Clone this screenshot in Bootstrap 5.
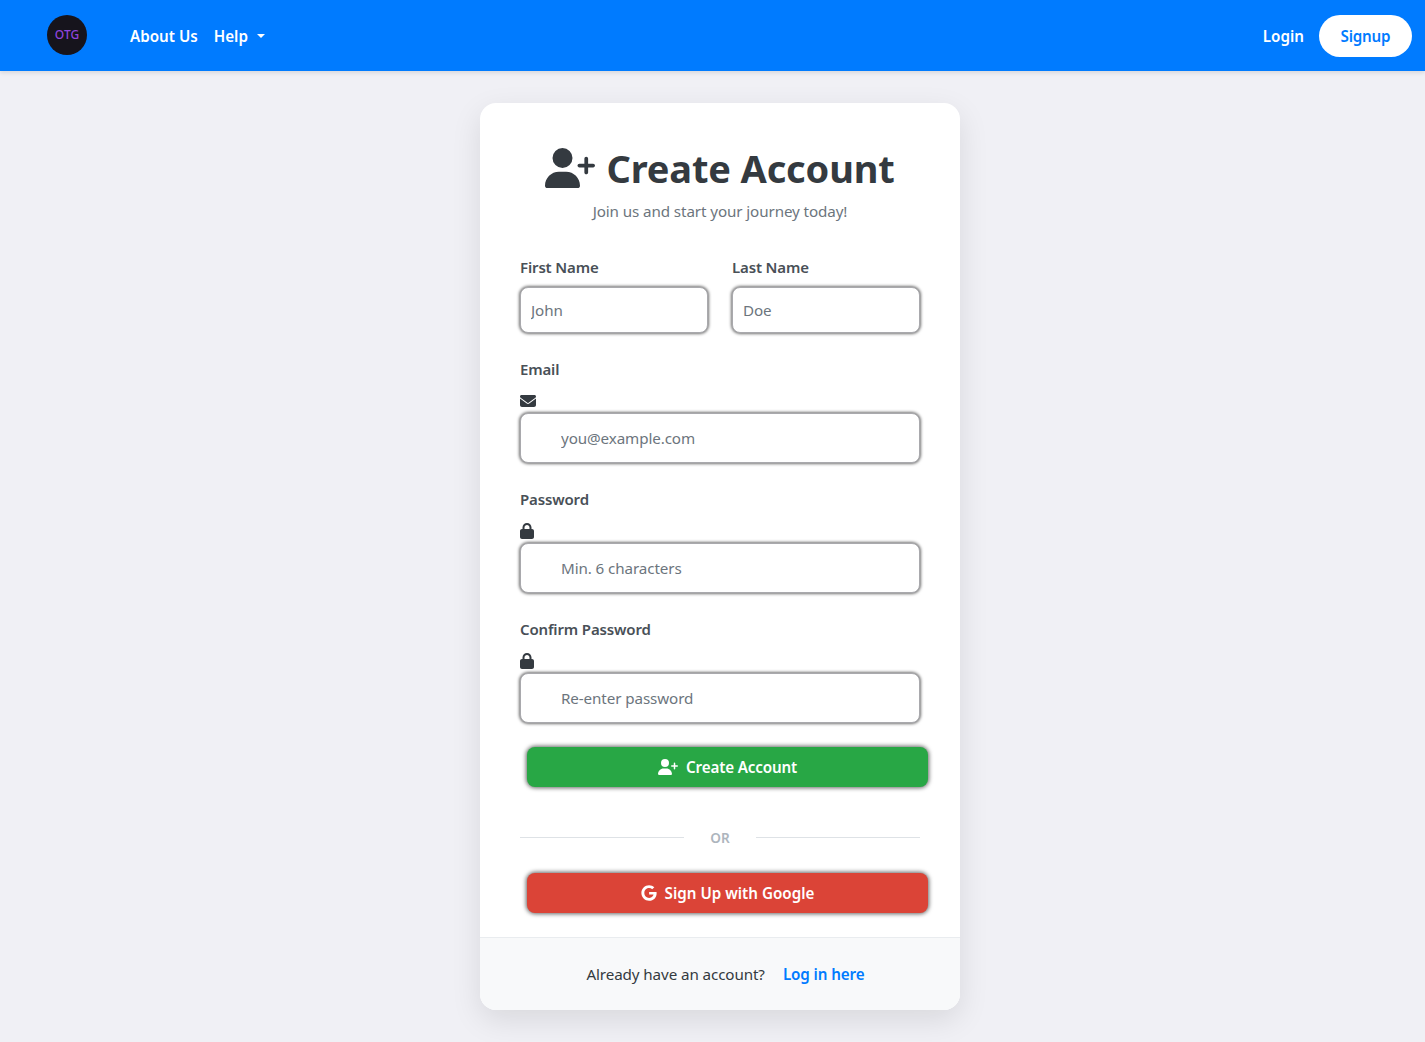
<!DOCTYPE html>
<html lang="en">
<head>
<meta charset="utf-8">
<title>Create Account</title>
<link href="https://cdn.jsdelivr.net/npm/bootstrap@5.3.0/dist/css/bootstrap.min.css" rel="stylesheet">
<style>
body{background:#f0f0f5;font-family:"Noto Sans","Open Sans",sans-serif;color:#343a40;min-height:1042px}
.topbar{background:#007bff;height:71px;padding:0 13px 0 47px;box-shadow:0 2px 4px rgba(0,0,0,.1)}
.logo-disc{width:40px;height:40px;border-radius:50%;background:#16141c;color:#9044dc;font-size:12px;line-height:40px;text-align:center;font-weight:500;margin-right:43px;margin-top:-1px}
.top-link{color:#fff;font-weight:600;font-size:15.2px;text-decoration:none;padding-top:2px}
.top-caret{display:inline-block;margin-left:9px;vertical-align:4px;border-top:4.5px solid #fff;border-left:4.5px solid transparent;border-right:4.5px solid transparent}
.signup-pill{background:#fff;color:#007bff;border-radius:21px;width:93px;height:42px;line-height:42px;text-align:center;margin-left:15px;font-weight:600;font-size:15.2px;text-decoration:none;letter-spacing:-.2px}
.panel-wrap{padding-left:15px}
.signup-panel{width:480px;margin-top:32px;background:#fff;border-radius:16px;box-shadow:0 10px 30px rgba(0,0,0,.1);overflow:hidden}
.panel-head{padding:39px 40px 0;text-align:center}
.panel-title{font-size:38px;font-weight:700;line-height:52px;margin:0;color:#343a40;letter-spacing:-.15px}
.panel-title svg{width:50px;height:40px;vertical-align:-5px;margin-right:11px;fill:#343a40}
.panel-sub{color:#6c757d;font-size:15.2px;line-height:24px;margin:5px 0 0;letter-spacing:-.1px}
.panel-form{padding:32px 40px 0}
.field-label{display:block;font-weight:600;font-size:15px;line-height:24px;margin-bottom:8px;color:#495057;letter-spacing:-.15px}
.field-input{display:block;width:100%;height:46px;padding:0 10px;border:1px solid #a9a9ad;border-radius:8px;font-size:15.2px;color:#343a40;box-shadow:0 0 3px 1px rgba(0,0,0,.55);letter-spacing:-.1px;font-family:inherit}
.field-input::placeholder{color:#6c757d;opacity:1}
.field-input.tall{height:50px;padding-left:40px}
.field-icon{display:block;height:16px;margin:12px 0 4px;fill:#343a40}
.field-gap{margin-bottom:24px}
.act-btn{display:flex;align-items:center;justify-content:center;gap:8px;width:401px;height:40px;margin-left:7px;border:0;border-radius:8px;color:#fff;font-size:15.2px;font-weight:600;box-shadow:0 0 4px 1px rgba(0,0,0,.6);letter-spacing:-.15px;font-family:inherit}
.act-green{background:#28a745}
.act-red{background:#db4437;letter-spacing:0}
.act-btn svg{fill:#fff}
.or-rule{display:flex;align-items:center;color:#adb5bd;font-size:13.6px;font-weight:600;height:20px;margin:40px 0 26px}
.or-rule::before,.or-rule::after{content:"";flex:1;height:1px;background:#dee2e6}
.or-rule span{width:72px;text-align:center;padding-top:2px}
.panel-foot{margin-top:24px;height:73px;padding-left:11px;background:#f8f9fa;border-top:1px solid #e9ecef;font-size:15.2px;letter-spacing:-.1px}
.panel-foot a{color:#007bff;font-weight:600;text-decoration:none;margin-left:18px}
</style>
</head>
<body>
<nav class="topbar d-flex align-items-center">
  <div class="logo-disc">OTG</div>
  <a class="top-link me-3" href="#">About Us</a>
  <a class="top-link" href="#">Help<span class="top-caret"></span></a>
  <a class="top-link ms-auto" href="#">Login</a>
  <a class="signup-pill" href="#">Signup</a>
</nav>

<div class="panel-wrap d-flex justify-content-center">
<main class="signup-panel">
  <div class="panel-head">
    <h1 class="panel-title"><svg viewBox="0 0 640 512"><path d="M96 128a128 128 0 1 1 256 0A128 128 0 1 1 96 128zM0 482.3C0 383.8 79.8 304 178.3 304h91.4C368.2 304 448 383.8 448 482.3c0 16.4-13.3 29.7-29.7 29.7H29.7C13.3 512 0 498.7 0 482.3zM504 312V248H440c-13.3 0-24-10.7-24-24s10.7-24 24-24h64V136c0-13.3 10.7-24 24-24s24 10.7 24 24v64h64c13.3 0 24 10.7 24 24s-10.7 24-24 24H552v64c0 13.3-10.7 24-24 24s-24-10.7-24-24z"/></svg>Create Account</h1>
    <p class="panel-sub">Join us and start your journey today!</p>
  </div>
  <form class="panel-form">
    <div class="row gx-4 field-gap">
      <div class="col-6"><label class="field-label">First Name</label><input class="field-input" placeholder="John"></div>
      <div class="col-6"><label class="field-label">Last Name</label><input class="field-input" placeholder="Doe"></div>
    </div>
    <div class="field-gap">
      <label class="field-label mb-0">Email</label>
      <svg class="field-icon" viewBox="0 0 512 512" width="16" height="16"><path d="M48 64C21.5 64 0 85.5 0 112c0 15.1 7.1 29.3 19.2 38.4L236.8 313.6c11.4 8.5 27 8.5 38.4 0L492.8 150.4c12.1-9.1 19.2-23.3 19.2-38.4c0-26.5-21.5-48-48-48H48zM0 176V384c0 35.3 28.7 64 64 64H448c35.3 0 64-28.7 64-64V176L294.4 339.2c-22.8 17.1-54 17.1-76.8 0L0 176z"/></svg>
      <input class="field-input tall" placeholder="you@example.com">
    </div>
    <div class="field-gap">
      <label class="field-label mb-0">Password</label>
      <svg class="field-icon" viewBox="0 0 448 512" width="14" height="16"><path d="M144 144v48H304V144c0-44.2-35.8-80-80-80s-80 35.8-80 80zM80 192V144C80 64.5 144.5 0 224 0s144 64.5 144 144v48h16c35.3 0 64 28.7 64 64V448c0 35.3-28.7 64-64 64H64c-35.3 0-64-28.7-64-64V256c0-35.3 28.7-64 64-64H80z"/></svg>
      <input class="field-input tall" placeholder="Min. 6 characters">
    </div>
    <div class="field-gap">
      <label class="field-label mb-0">Confirm Password</label>
      <svg class="field-icon" viewBox="0 0 448 512" width="14" height="16"><path d="M144 144v48H304V144c0-44.2-35.8-80-80-80s-80 35.8-80 80zM80 192V144C80 64.5 144.5 0 224 0s144 64.5 144 144v48h16c35.3 0 64 28.7 64 64V448c0 35.3-28.7 64-64 64H64c-35.3 0-64-28.7-64-64V256c0-35.3 28.7-64 64-64H80z"/></svg>
      <input class="field-input tall" placeholder="Re-enter password">
    </div>
    <button type="button" class="act-btn act-green"><svg viewBox="0 0 640 512" width="20" height="16"><path d="M96 128a128 128 0 1 1 256 0A128 128 0 1 1 96 128zM0 482.3C0 383.8 79.8 304 178.3 304h91.4C368.2 304 448 383.8 448 482.3c0 16.4-13.3 29.7-29.7 29.7H29.7C13.3 512 0 498.7 0 482.3zM504 312V248H440c-13.3 0-24-10.7-24-24s10.7-24 24-24h64V136c0-13.3 10.7-24 24-24s24 10.7 24 24v64h64c13.3 0 24 10.7 24 24s-10.7 24-24 24H552v64c0 13.3-10.7 24-24 24s-24-10.7-24-24z"/></svg>Create Account</button>
    <div class="or-rule"><span>OR</span></div>
    <button type="button" class="act-btn act-red"><svg viewBox="0 0 488 512" width="16" height="16"><path d="M488 261.8C488 403.3 391.1 504 248 504 110.8 504 0 393.2 0 256S110.8 8 248 8c66.8 0 123 24.5 166.3 64.9l-67.5 64.9C258.5 52.6 94.3 116.6 94.3 256c0 86.5 69.1 156.6 153.7 156.6 98.2 0 135-70.4 140.8-106.9H248v-85.3h236.1c2.3 12.7 3.9 24.9 3.9 41.4z"/></svg>Sign Up with Google</button>
  </form>
  <div class="panel-foot d-flex align-items-center justify-content-center">Already have an account?<a href="#">Log in here</a></div>
</main>
</div>
<script src="https://cdn.jsdelivr.net/npm/bootstrap@5.3.0/dist/js/bootstrap.bundle.min.js"></script>
</body>
</html>
